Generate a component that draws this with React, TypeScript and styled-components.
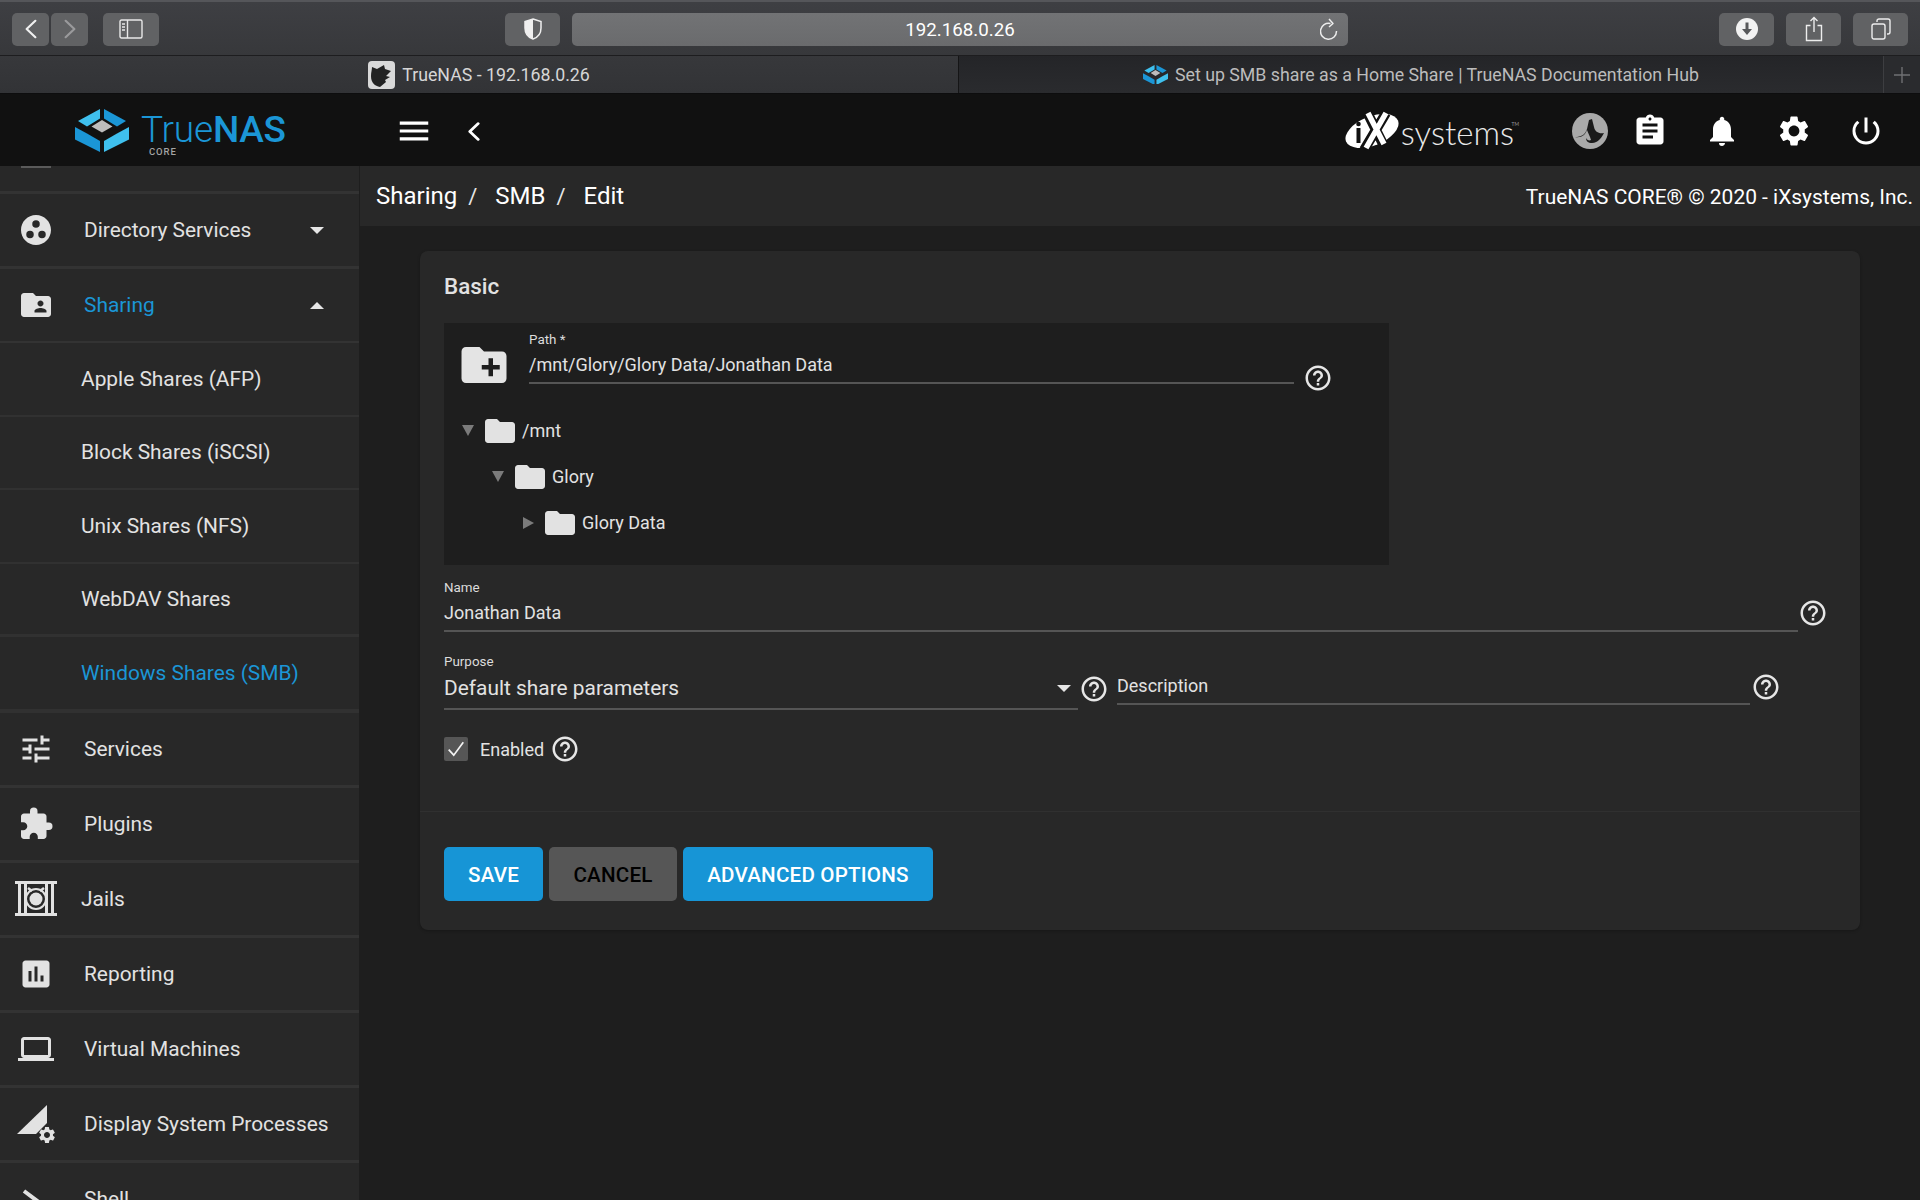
import React from "react";
import styled, { createGlobalStyle } from "styled-components";
import {
  MdGroupWork, MdFolderShared, MdTune, MdExtension, MdAssessment, MdLaptop, MdSettings,
  MdMenu, MdAssignment, MdNotifications, MdPowerSettingsNew, MdHelpOutline, MdCreateNewFolder, MdFolder,
} from "react-icons/md";

const GlobalStyle = createGlobalStyle`
  html, body { margin: 0; padding: 0; background: #1e1e1e; overflow: hidden; }
  body { font-family: Roboto, "Liberation Sans", sans-serif; color: #e0e0e0; }
  * { box-sizing: border-box; }
`;

const Page = styled.div`
  width: 1920px;
  height: 1200px;
  display: flex;
  flex-direction: column;
  overflow: hidden;
  background: #1e1e1e;
`;

/* Safari chrome */
const Toolbar = styled.div`
  height: 56px;
  flex: none;
  display: flex;
  align-items: center;
  padding: 1px 12px 0;
  background: linear-gradient(#3e3f43, #37383b);
  border-top: 2px solid #55565a;
  border-bottom: 1px solid #1d1d1f;
`;
const ChromeBtn = styled.div<{ $w: number; $ml?: number }>`
  width: ${(p) => p.$w}px;
  margin-left: ${(p) => p.$ml ?? 0}px;
  height: 33px;
  flex: none;
  border-radius: 5px;
  background: #616264;
  display: flex;
  align-items: center;
  justify-content: center;
`;
const UrlBar = styled.div`
  width: 776px;
  margin-left: 12px;
  height: 33px;
  flex: none;
  position: relative;
  border-radius: 5px;
  background: linear-gradient(#727375, #6a6b6d);
  color: #fff;
  font-size: 18.7px;
  text-align: center;
  line-height: 34px;
`;
const Reload = styled.span`
  position: absolute;
  right: 10px;
  top: 5px;
  display: flex;
`;
const ToolRight = styled.div`
  margin-left: auto;
  display: flex;
  gap: 12px;
`;
const Tabs = styled.div`
  height: 38px;
  flex: none;
  display: flex;
  background: #2a2b2e;
  border-bottom: 1px solid #0d0d0e;
`;
const Tab = styled.div<{ $active?: boolean; $w: number }>`
  width: ${(p) => p.$w}px;
  flex: none;
  display: flex;
  align-items: center;
  justify-content: center;
  gap: 7px;
  font-size: 17.75px;
  color: ${(p) => (p.$active ? "#d6d6d6" : "#bcbcbc")};
  background: ${(p) => (p.$active ? "linear-gradient(#37383b, #323336)" : "linear-gradient(#242528, #2a2b2e)")};
  border-right: 1px solid ${(p) => (p.$active ? "#151516" : "#3d3e41")};
`;
const NewTab = styled.div`
  flex: 1;
  display: flex;
  align-items: center;
  justify-content: center;
  background: #2a2b2e;
`;

/* TrueNAS header */
const Header = styled.header`
  height: 72px;
  flex: none;
  display: flex;
  align-items: center;
  padding-top: 2px;
  background: #111;
`;
const Brand = styled.div`
  width: 359px;
  flex: none;
  display: flex;
  align-items: flex-start;
  padding-left: 75px;
  gap: 12px;
  margin-top: -2px;
`;
const BrandWord = styled.div`
  position: relative;
  color: #1b96d6;
  font-size: 37px;
  font-weight: 300;
  line-height: 44px;
  letter-spacing: -0.2px;
  margin-top: -1px;
  b { font-weight: 500; }
`;
const BrandSub = styled.span`
  position: absolute;
  left: 8px;
  top: 38px;
  font-size: 9.5px;
  font-weight: 500;
  line-height: 12px;
  letter-spacing: 0.9px;
  color: #a4a4a4;
`;
const MenuBtn = styled.div`
  margin-left: 36px;
  display: flex;
  color: #fff;
`;
const BackBtn = styled.div`
  margin-left: 35px;
  display: flex;
`;
const HeaderRight = styled.div`
  margin-left: auto;
  display: flex;
  align-items: center;
  padding-right: 18px;
`;
const IxLogo = styled.div`
  display: flex;
  align-items: center;
  gap: 2px;
  margin-right: 47px;
`;
const IxWord = styled.span`
  position: relative;
  font-family: Lato, Roboto, sans-serif;
  font-weight: 300;
  font-size: 33px;
  line-height: 40px;
  letter-spacing: 0;
  color: #e9e9e9;
  padding-right: 5px;
  top: 1px;
  sup { position: absolute; right: 0; top: 9px; font-size: 5px; line-height: 6px; letter-spacing: 0; }
`;
const HeadIcon = styled.div<{ $w?: number }>`
  width: ${(p) => p.$w ?? 72}px;
  display: flex;
  justify-content: center;
  align-items: center;
  color: #fff;
`;

const Body = styled.div`
  flex: 1;
  min-height: 0;
  display: flex;
`;

/* Sidebar */
const Sidebar = styled.nav`
  width: 359px;
  flex: none;
  margin-right: 1px;
  height: 1040px;
  overflow: hidden;
  background: #282828;
`;
const Stub = styled.div`
  height: 28px;
  padding-left: 21px;
  border-bottom: 3px solid #333;
`;
const StubMark = styled.div`
  width: 30px;
  height: 1.5px;
  background: #5a5a5a;
`;
const NavRow = styled.div<{ $h?: number; $b?: number; $blue?: boolean }>`
  height: ${(p) => p.$h ?? 75}px;
  flex: none;
  display: flex;
  align-items: center;
  border-bottom: ${(p) => p.$b ?? 3}px solid #333;
  color: ${(p) => (p.$blue ? "#1b96d6" : "#e2e2e2")};
  font-size: 20.9px;
  line-height: 24px;
  white-space: nowrap;
`;
const NavIcon = styled.span`
  width: 72px;
  flex: none;
  display: flex;
  justify-content: center;
  color: #e2e2e2;
`;
const NavLabel = styled.span<{ $ml?: number }>`
  margin-left: ${(p) => p.$ml ?? 12}px;
  flex: 1;
`;
const Caret = styled.span<{ $up?: boolean; $mt?: number; $mr?: number }>`
  width: 0;
  height: 0;
  margin-top: ${(p) => p.$mt ?? 0}px;
  margin-right: ${(p) => p.$mr ?? 0}px;
  border-left: 7.5px solid transparent;
  border-right: 7.5px solid transparent;
  border-${(p) => (p.$up ? "bottom" : "top")}: 7.5px solid #e6e6e6;
`;
const SubRow = styled.div<{ $blue?: boolean; $b?: number; $h?: number }>`
  height: ${(p) => p.$h ?? 73.5}px;
  flex: none;
  display: flex;
  align-items: center;
  padding-left: 81px;
  border-bottom: ${(p) => p.$b ?? 2}px solid #313131;
  color: ${(p) => (p.$blue ? "#1b96d6" : "#e2e2e2")};
  font-size: 20.9px;
`;

/* Content */
const Main = styled.main`
  flex: 1;
  min-width: 0;
`;
const Crumbs = styled.div`
  height: 60px;
  display: flex;
  align-items: center;
  padding: 0 7px 0 16px;
  background: #282828;
  color: #fff;
`;
const Crumb = styled.span`
  font-size: 24px;
`;
const CrumbSep = styled.span`
  font-size: 22px;
  margin: 0 18px 0 11px;
  color: #e6e6e6;
`;
const Copyright = styled.span`
  margin-left: auto;
  font-size: 20.95px;
  position: relative;
  top: 1px;
`;
const Card = styled.section`
  width: 1440px;
  height: 679px;
  margin: 25px 0 0 60px;
  background: #282828;
  border-radius: 8px;
  box-shadow: 0 1px 3px rgba(0, 0, 0, 0.25);
`;
const CardBody = styled.div`
  height: 561px;
  padding: 0 24px;
  border-bottom: 1px solid #303030;
`;
const CardTitle = styled.h2`
  margin: 0;
  height: 72px;
  font-size: 22.4px;
  font-weight: 500;
  line-height: 70px;
  color: #e2e2e2;
`;
const Explorer = styled.div`
  width: 945px;
  height: 242px;
  background: #1e1e1e;
`;
const PathRow = styled.div`
  height: 84.5px;
  display: flex;
  align-items: flex-start;
  padding: 8px 0 0 12.5px;
`;
const PlusFolder = styled.span`
  display: flex;
  margin-top: 7px;
  color: #e4e4e4;
`;
const Field = styled.div<{ $w?: number; $pb?: number; $mt?: number; $ml?: number }>`
  ${(p) => (p.$w ? `width: ${p.$w}px; flex: none;` : "")}
  margin-top: ${(p) => p.$mt ?? 0}px;
  margin-left: ${(p) => p.$ml ?? 0}px;
  padding-bottom: ${(p) => p.$pb ?? 5}px;
  border-bottom: 2px solid #555;
`;
const Label = styled.div`
  padding-top: 1px;
  font-size: 13.4px;
  line-height: 16px;
  color: #dcdcdc;
`;
const Value = styled.div<{ $size?: number; $mt?: number }>`
  margin-top: ${(p) => p.$mt ?? 5}px;
  font-size: ${(p) => p.$size ?? 18}px;
  line-height: 24px;
  color: #e2e2e2;
`;
const Help = styled.span<{ $mt?: number; $ml?: number }>`
  display: flex;
  flex: none;
  margin-top: ${(p) => p.$mt ?? 0}px;
  margin-left: ${(p) => p.$ml ?? 0}px;
  color: #e6e6e6;
`;
const TreeRow = styled.div<{ $depth: number }>`
  height: 46px;
  display: flex;
  align-items: center;
  padding-left: ${(p) => 18 + p.$depth * 30}px;
  font-size: 18px;
  color: #e2e2e2;
`;
const TreeArrow = styled.span<{ $open?: boolean }>`
  width: 20px;
  flex: none;
  display: flex;
  &::before {
    content: "";
    width: 0;
    height: 0;
    ${(p) =>
      p.$open
        ? `border-left: 6.5px solid transparent; border-right: 6.5px solid transparent; border-top: 11px solid #7b7b7b;`
        : `margin-left: 1px; border-top: 6.5px solid transparent; border-bottom: 6.5px solid transparent; border-left: 11px solid #7b7b7b;`}
  }
`;
const TreeFolder = styled.span`
  display: flex;
  margin-right: 4px;
  color: #e2e2e2;
`;
const FormRow = styled.div<{ $mt: number }>`
  display: flex;
  align-items: flex-start;
  margin-top: ${(p) => p.$mt}px;
`;
const SelectValue = styled.div`
  display: flex;
  align-items: center;
  justify-content: space-between;
  padding-right: 7px;
`;
const CheckRow = styled.div`
  display: flex;
  align-items: center;
  height: 30px;
  margin-top: 24px;
  font-size: 18px;
  color: #e2e2e2;
`;
const Checkbox = styled.span`
  width: 24px;
  height: 24px;
  margin-right: 12px;
  border-radius: 2px;
  background: #565656;
  display: flex;
  align-items: center;
  justify-content: center;
`;
const Actions = styled.div`
  display: flex;
  gap: 6px;
  padding: 35px 24px 0;
`;
const Button = styled.button<{ $w: number; $ghost?: boolean }>`
  width: ${(p) => p.$w}px;
  height: 54px;
  border: 0;
  border-radius: 5px;
  padding: 1px 0 0;
  font-family: Roboto, sans-serif;
  font-size: 20.6px;
  font-weight: 500;
  letter-spacing: 0.2px;
  color: ${(p) => (p.$ghost ? "#000" : "#fff")};
  background: ${(p) => (p.$ghost ? "#565656" : "#1795d6")};
`;

const LogoMark = ({ size = 54 }: { size?: number }) => (
  <svg width={size} height={(size * 43) / 54} viewBox="0 0 54 43" style={{ flex: "none" }}>
    <polygon points="3,12 25,0 25,9.5 12,17.5" fill="#3fc0ee" />
    <polygon points="29,0 51,12 42,17.5 29,9.5" fill="#1b96d6" />
    <polygon points="0,18 12,24.5 25,32 25,43 0,30.5" fill="#1b96d6" />
    <polygon points="54,18 54,30.5 29,43 29,32 42,24.5" fill="#3fc0ee" />
    <polygon points="27,11 37.5,17.5 27,23.5 16.5,17.5" fill="#bdbdbd" />
  </svg>
);

const IxMark = () => (
  <svg width="54" height="40" viewBox="0 0 54 40" style={{ flex: "none" }}>
    <ellipse cx="27" cy="20" rx="28" ry="14.5" transform="rotate(-22 27 20)" fill="#fff" />
    <path d="M22 1L39 35M41 2L19 39" stroke="#111" strokeWidth="10" fill="none" />
    <path d="M23 2L39 33M41 2L21 37" stroke="#fff" strokeWidth="5.5" fill="none" />
    <circle cx="13.500" cy="13" r="2.3" fill="#111" />
    <rect x="11.500" y="17" width="4" height="15" fill="#111" />
  </svg>
);

const Avatar = () => (
  <svg width="36" height="36" viewBox="0 0 36 36">
    <circle cx="18" cy="18" r="18" fill="#a9a9a9" />
    <path d="M3 24c6 0 10-2 12-8l2-9 3-1 2 8c1 5 5 7 10 6-2 4-6 10-12 10-4 0-6-2-6-5 1 2 3 3 5 2-1-4-3-7-4-10-2 5-5 8-12 7z" fill="#1a1a1a" />
  </svg>
);

const FavShark = () => (
  <svg width="27" height="28" viewBox="0 0 27 28" style={{ flex: "none" }}>
    <rect width="27" height="28" rx="4" fill="#d9d9d9" />
    <path d="M4 6l5 2 7-4 1 4 6 2-5 5 4 1-5 3 1 2-6 5c-5-1-9-4-9-11 0-4 1-6 1-9z" fill="#222" />
  </svg>
);

const Chevron = ({ dir, color, w = 11, h = 18, sw = 2 }: { dir: "l" | "r"; color: string; w?: number; h?: number; sw?: number }) => (
  <svg width={w} height={h} viewBox="0 0 11 18" fill="none" stroke={color} strokeWidth={sw} strokeLinecap="round" strokeLinejoin="round">
    <path d={dir === "l" ? "M9.5 1.5L1.5 9l8 7.5" : "M1.5 1.5L9.5 9l-8 7.5"} />
  </svg>
);

const JailIcon = () => (
  <svg width="42" height="36" viewBox="0 0 42 36" fill="none">
    <rect x="0" y="0" width="42" height="3" fill="#e2e2e2" />
    <rect x="0" y="32" width="42" height="3" fill="#e2e2e2" />
    {[3, 9, 30, 36].map((x) => (
      <rect key={x} x={x} y="3" width="3" height="29" fill="#e2e2e2" />
    ))}
    <circle cx="21" cy="18" r="10" stroke="#e2e2e2" strokeWidth="2" />
    <circle cx="21" cy="18" r="6.500" fill="#e2e2e2" />
    <path d="M13 7l4 3M29 7l-4 3" stroke="#e2e2e2" strokeWidth="2.500" />
  </svg>
);

const ProcessIcon = () => (
  <svg width="38" height="40" viewBox="0 0 38 40">
    <polygon points="0,30 30,1 30,19 19,30" fill="#e2e2e2" />
    <MdSettings x={20} y={21} size={20} color="#e2e2e2" />
  </svg>
);

const HelpIcon = () => <MdHelpOutline size={30} />;

export default function App() {
  return (
    <Page>
      <GlobalStyle />
      <Toolbar>
        <ChromeBtn $w={37}><Chevron dir="l" color="#f0f0f0" w={12} h={22} /></ChromeBtn>
        <ChromeBtn $w={37} $ml={2}><Chevron dir="r" color="#9a9a9c" w={12} h={22} /></ChromeBtn>
        <ChromeBtn $w={56} $ml={15}>
          <svg width="24" height="20" viewBox="0 0 24 20" fill="none" stroke="#e8e8e8" strokeWidth="1.4">
            <rect x="1" y="1" width="22" height="18" rx="1.5" />
            <path d="M8.5 1v18" />
            <path d="M3 5h3M3 8h3M3 11h3" />
          </svg>
        </ChromeBtn>
        <ChromeBtn $w={55} $ml={346}>
          <svg width="18" height="22" viewBox="0 0 18 22">
            <path d="M9 1l8 2.5V10c0 5.5-3.5 9.5-8 11-4.500-1.500-8-5.500-8-11V3.500z" fill="none" stroke="#efefef" strokeWidth="1.5" />
            <path d="M9 1L1 3.500V10c0 5.500 3.500 9.500 8 11z" fill="#efefef" />
          </svg>
        </ChromeBtn>
        <UrlBar>
          192.168.0.26
          <Reload>
            <svg width="18" height="24" viewBox="0 0 18 24" fill="none" stroke="#ececec" strokeWidth="1.5">
              <path d="M10.500 5.500A8 8 0 1 0 16.500 13" />
              <path d="M9 1l4 4.500-4 3.500" strokeLinejoin="round" />
            </svg>
          </Reload>
        </UrlBar>
        <ToolRight>
          <ChromeBtn $w={55}>
            <svg width="22" height="22" viewBox="0 0 22 22">
              <circle cx="11" cy="11" r="11" fill="#f2f2f2" />
              <path d="M9.500 4.500h3V11h3.500L11 17 6 11h3.500z" fill="#58595b" />
            </svg>
          </ChromeBtn>
          <ChromeBtn $w={55}>
            <svg width="18" height="26" viewBox="0 0 18 26" fill="none" stroke="#ededed" strokeWidth="1.4">
              <path d="M5.500 9.500H1.500v15h15v-15h-4" />
              <path d="M9 16V1.500M5.500 5L9 1.500 12.500 5" />
            </svg>
          </ChromeBtn>
          <ChromeBtn $w={55}>
            <svg width="20" height="22" viewBox="0 0 20 22" fill="none" stroke="#ededed" strokeWidth="1.4">
              <rect x="1" y="6" width="13" height="15" rx="2" />
              <path d="M6 4V3a2 2 0 0 1 2-2h9a2 2 0 0 1 2 2v11a2 2 0 0 1-2 2h-1" />
            </svg>
          </ChromeBtn>
        </ToolRight>
      </Toolbar>
      <Tabs>
        <Tab $active $w={959}><FavShark />TrueNAS - 192.168.0.26</Tab>
        <Tab $w={925}><LogoMark size={25} />Set up SMB share as a Home Share | TrueNAS Documentation Hub</Tab>
        <NewTab>
          <svg width="16" height="16" viewBox="0 0 16 16" stroke="#6f7073" strokeWidth="1.4">
            <path d="M8 0v16M0 8h16" />
          </svg>
        </NewTab>
      </Tabs>
      <Header>
        <Brand>
          <LogoMark />
          <BrandWord>
            True<b>NAS</b>
            <BrandSub>CORE</BrandSub>
          </BrandWord>
        </Brand>
        <MenuBtn><MdMenu size={38} /></MenuBtn>
        <BackBtn><Chevron dir="l" color="#fff" w={12} h={19} sw={2.6} /></BackBtn>
        <HeaderRight>
          <IxLogo>
            <IxMark />
            <IxWord>systems<sup>TM</sup></IxWord>
          </IxLogo>
          <HeadIcon $w={48}><Avatar /></HeadIcon>
          <HeadIcon $w={72}><MdAssignment size={36} /></HeadIcon>
          <HeadIcon><MdNotifications size={36} /></HeadIcon>
          <HeadIcon><MdSettings size={36} /></HeadIcon>
          <HeadIcon><MdPowerSettingsNew size={36} /></HeadIcon>
        </HeaderRight>
      </Header>
      <Body>
        <Sidebar>
          <Stub><StubMark /></Stub>
          <NavRow><NavIcon><MdGroupWork size={36} /></NavIcon><NavLabel>Directory Services</NavLabel><Caret $mr={35} /></NavRow>
          <NavRow $h={74} $b={2} $blue><NavIcon><MdFolderShared size={36} /></NavIcon><NavLabel>Sharing</NavLabel><Caret $up $mr={35} /></NavRow>
          <SubRow>Apple Shares (AFP)</SubRow>
          <SubRow>Block Shares (iSCSI)</SubRow>
          <SubRow>Unix Shares (NFS)</SubRow>
          <SubRow $b={3}>WebDAV Shares</SubRow>
          <SubRow $blue $b={4} $h={76}>Windows Shares (SMB)</SubRow>
          <NavRow><NavIcon><MdTune size={36} /></NavIcon><NavLabel>Services</NavLabel></NavRow>
          <NavRow><NavIcon><MdExtension size={36} /></NavIcon><NavLabel>Plugins</NavLabel></NavRow>
          <NavRow><NavIcon><JailIcon /></NavIcon><NavLabel $ml={9}>Jails</NavLabel></NavRow>
          <NavRow><NavIcon><MdAssessment size={36} /></NavIcon><NavLabel>Reporting</NavLabel></NavRow>
          <NavRow><NavIcon><MdLaptop size={36} /></NavIcon><NavLabel>Virtual Machines</NavLabel></NavRow>
          <NavRow><NavIcon><ProcessIcon /></NavIcon><NavLabel>Display System Processes</NavLabel></NavRow>
          <NavRow>
            <NavIcon>
              <svg width="36" height="36" viewBox="0 0 36 36" fill="none" stroke="#e2e2e2" strokeWidth="4"><path d="M6 10l12 9-12 9" /></svg>
            </NavIcon>
            <NavLabel>Shell</NavLabel>
          </NavRow>
        </Sidebar>
        <Main>
          <Crumbs>
            <Crumb>Sharing</Crumb><CrumbSep>/</CrumbSep>
            <Crumb>SMB</Crumb><CrumbSep>/</CrumbSep>
            <Crumb>Edit</Crumb>
            <Copyright>TrueNAS CORE® © 2020 - iXsystems, Inc.</Copyright>
          </Crumbs>
          <Card>
            <CardBody>
              <CardTitle>Basic</CardTitle>
              <Explorer>
                <PathRow>
                  <PlusFolder><MdCreateNewFolder size={54} /></PlusFolder>
                  <Field $w={765} $ml={18.5}>
                    <Label>Path *</Label>
                    <Value>/mnt/Glory/Glory Data/Jonathan Data</Value>
                  </Field>
                  <Help $mt={32} $ml={9}><HelpIcon /></Help>
                </PathRow>
                <TreeRow $depth={0}><TreeArrow $open /><TreeFolder><MdFolder size={36} /></TreeFolder>/mnt</TreeRow>
                <TreeRow $depth={1}><TreeArrow $open /><TreeFolder><MdFolder size={36} /></TreeFolder>Glory</TreeRow>
                <TreeRow $depth={2}><TreeArrow /><TreeFolder><MdFolder size={36} /></TreeFolder>Glory Data</TreeRow>
              </Explorer>
              <FormRow $mt={14}>
                <Field $w={1354}>
                  <Label>Name</Label>
                  <Value>Jonathan Data</Value>
                </Field>
                <Help $mt={19}><HelpIcon /></Help>
              </FormRow>
              <FormRow $mt={21}>
                <Field $w={634} $pb={8}>
                  <Label>Purpose</Label>
                  <SelectValue>
                    <Value $size={20.9} $mt={6}>Default share parameters</Value>
                    <Caret $mt={6} />
                  </SelectValue>
                </Field>
                <Help $mt={21} $ml={1}><HelpIcon /></Help>
                <Field $w={633} $mt={21} $ml={8}>
                  <Value $mt={0}>Description</Value>
                </Field>
                <Help $mt={19} $ml={1}><HelpIcon /></Help>
              </FormRow>
              <CheckRow>
                <Checkbox>
                  <svg width="18" height="16" viewBox="0 0 16 14" fill="none" stroke="#f4f4f4" strokeWidth="1.5"><path d="M1.500 7.500L6 12.500 14.500 1" /></svg>
                </Checkbox>
                Enabled
                <Help $ml={6}><HelpIcon /></Help>
              </CheckRow>
            </CardBody>
            <Actions>
              <Button $w={99}>SAVE</Button>
              <Button $w={128} $ghost>CANCEL</Button>
              <Button $w={250}>ADVANCED OPTIONS</Button>
            </Actions>
          </Card>
        </Main>
      </Body>
    </Page>
  );
}
